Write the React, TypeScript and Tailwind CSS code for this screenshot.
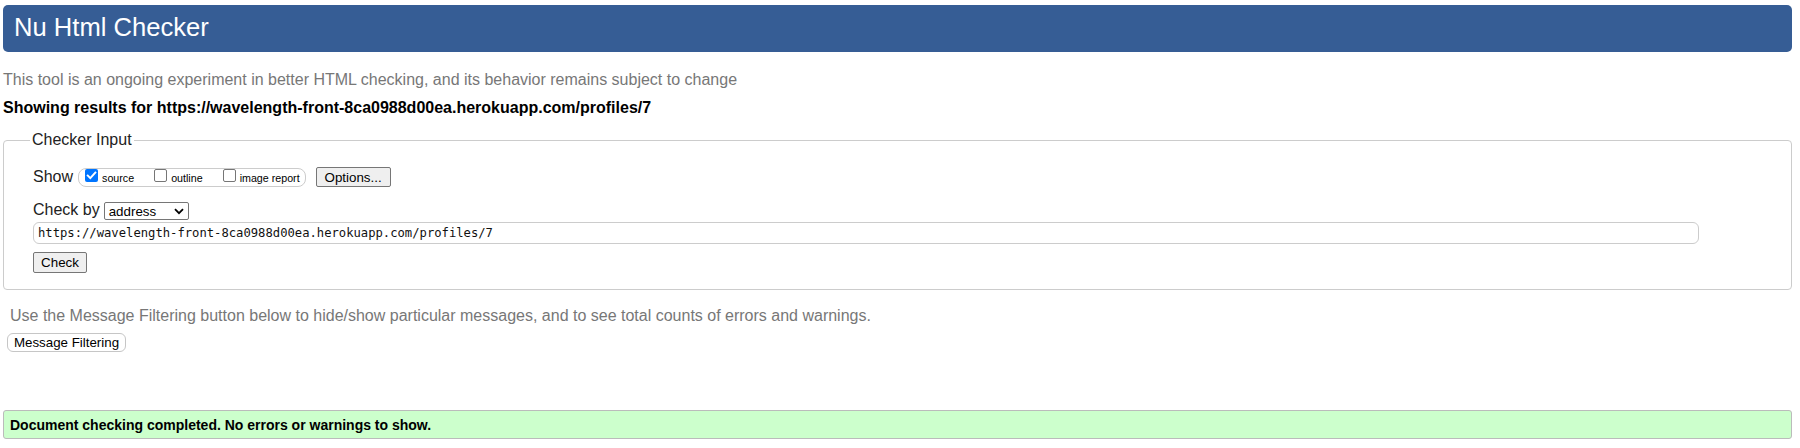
import React from "react";

function Box({ checked }: { checked?: boolean }) {
  if (checked) {
    return (
      <span className="block w-[13px] h-[13px] rounded-[2px] bg-[#0075ff] shrink-0">
        <svg width="13" height="13" viewBox="0 0 13 13" className="block">
          <path d="M2.8 6.6 L5.3 9.1 L10.3 3.6" fill="none" stroke="#ffffff" strokeWidth="2" strokeLinecap="square" />
        </svg>
      </span>
    );
  }
  return <span className="block w-[13px] h-[13px] rounded-[2px] border border-[#767676] bg-white shrink-0" />;
}

function Opt({ checked, label }: { checked?: boolean; label: string }) {
  return (
    <label className="flex items-start gap-[4px]">
      <Box checked={checked} />
      <span className="mt-[3px] text-[10.7px] leading-[13px] text-black whitespace-nowrap">{label}</span>
    </label>
  );
}

export default function App() {
  return (
    <div className="w-[1800px] h-[448px] bg-white pl-[3px] pr-[8px] pt-[5px] font-['Liberation_Sans',Arial,sans-serif] overflow-hidden">
      <div className="h-[47px] bg-[#365d95] rounded-[5px] flex items-center pl-[11px] pb-[2px]">
        <h1 className="text-[25.6px] leading-[29px] text-white font-normal">Nu Html Checker</h1>
      </div>

      <p className="mt-[19px] text-[16px] leading-[18px] text-[#777]">
        This tool is an ongoing experiment in better HTML checking, and its behavior remains subject to change
      </p>
      <p className="mt-[10px] text-[16px] leading-[18px] font-bold text-black">
        Showing results for https://wavelength-front-8ca0988d00ea.herokuapp.com/profiles/7
      </p>

      <fieldset className="mt-[14px] border border-[#cccccc] rounded-[4px] pl-[29px] pt-[18px] pb-[16px]">
        <legend className="ml-[-3px] px-[2px] text-[16px] leading-[18px] text-[#222]">Checker Input</legend>

        <div className="flex items-start">
          <span className="text-[16px] leading-[19px] text-[#222]">Show</span>
          <div className="ml-[5px] mt-[1px] h-[19px] border border-[#cccccc] rounded-[8px] pl-[6px] pr-[5px] flex items-start gap-[19px]">
            <Opt checked label="source" />
            <div className="ml-px">
              <Opt label="outline" />
            </div>
            <div className="ml-px">
              <Opt label="image report" />
            </div>
          </div>
          <button className="ml-[10px] w-[75px] h-[20px] bg-[#efefef] border border-[#767676] rounded-[2px] flex items-center justify-center text-[13.33px] leading-[15px] text-black">
            Options...
          </button>
        </div>

        <div className="mt-[14px] flex items-start">
          <span className="text-[16px] leading-[18px] text-[#222]">Check by</span>
          <div className="ml-[4px] mt-[1px] w-[85px] h-[18px] border border-[#767676] rounded-[2px] bg-white flex items-center justify-between pl-[4px] pr-[4px]">
            <span className="text-[13.33px] leading-[15px] text-black">address</span>
            <svg width="10" height="7" viewBox="0 0 10 7" className="block">
              <path d="M1 1.2 L5 5.2 L9 1.2" fill="none" stroke="#000000" strokeWidth="1.8" />
            </svg>
          </div>
        </div>

        <div className="mt-[2px] w-[1666px] h-[22px] border border-[#cccccc] rounded-[6px] bg-white flex items-center pl-[4px]">
          <span className="font-['DejaVu_Sans_Mono','Liberation_Mono',monospace] text-[12.2px] leading-[14px] text-[#111]">
            https://wavelength-front-8ca0988d00ea.herokuapp.com/profiles/7
          </span>
        </div>

        <button className="mt-[8px] w-[54px] h-[21px] bg-[#efefef] border border-[#767676] rounded-[2px] flex items-center justify-center text-[13.33px] leading-[15px] text-black">
          Check
        </button>
      </fieldset>

      <p className="mt-[17px] pl-[7px] text-[16px] leading-[18px] text-[#777]">
        Use the Message Filtering button below to hide/show particular messages, and to see total counts of errors and warnings.
      </p>
      <button className="block mt-[8px] ml-[4px] w-[119px] h-[19px] bg-white border border-[#c6c6c6] rounded-[6px] text-[13.33px] leading-[15px] text-black">
        Message Filtering
      </button>

      <div className="mt-[58px] h-[29px] bg-[#ccffcc] border border-[#bbbbbb] rounded-[3px] flex items-center pl-[6px]">
        <p className="text-[14px] leading-[16px] font-bold text-black">
          Document checking completed. No errors or warnings to show.
        </p>
      </div>
    </div>
  );
}
